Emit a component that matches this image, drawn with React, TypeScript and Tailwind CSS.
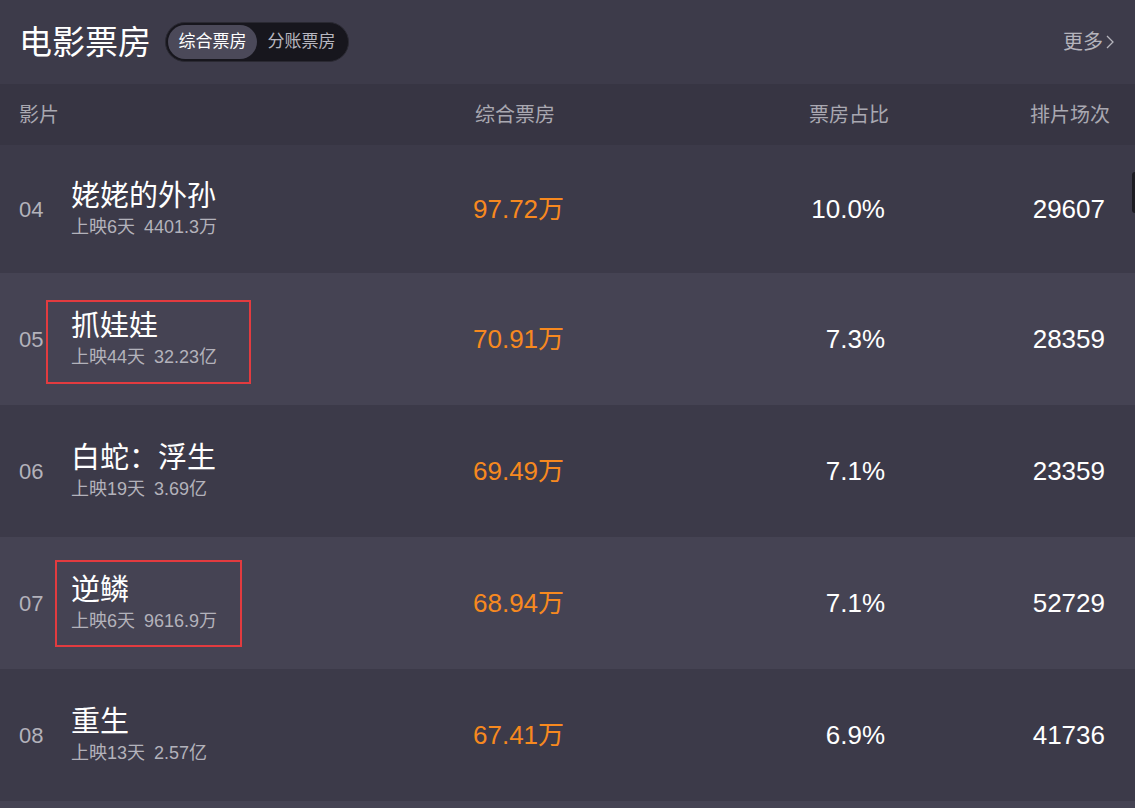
const films = [
  { no: '04', name: '姥姥的外孙', days: '上映6天', total: '4401.3万', box: '97.72万', rate: '10.0%', shows: '29607', light: false, mark: '' },
  { no: '05', name: '抓娃娃', days: '上映44天', total: '32.23亿', box: '70.91万', rate: '7.3%', shows: '28359', light: true, mark: 'a' },
  { no: '06', name: '白蛇：浮生', days: '上映19天', total: '3.69亿', box: '69.49万', rate: '7.1%', shows: '23359', light: false, mark: '' },
  { no: '07', name: '逆鳞', days: '上映6天', total: '9616.9万', box: '68.94万', rate: '7.1%', shows: '52729', light: true, mark: 'b' },
  { no: '08', name: '重生', days: '上映13天', total: '2.57亿', box: '67.41万', rate: '6.9%', shows: '41736', light: false, mark: '' },
];

const font = { fontFamily: '"Liberation Sans", "Noto Sans CJK SC", sans-serif' };

export default function App() {
  return (
    <div className="relative w-[1135px] h-[808px] overflow-hidden bg-[#454353]" style={font}>
      {/* top bar */}
      <div className="h-[84px] bg-[#3d3b4a] flex items-center pl-[19px] pr-[19px]">
        <h1 className="text-[33px] text-white leading-none">电影票房</h1>
        <div className="ml-[14px] h-[40px] w-[184px] rounded-full bg-[#17161d] border border-[#2a2932] flex items-center px-[2px]">
          <span className="h-[34px] w-[89px] rounded-full bg-[#4b4959] text-white text-[17px] flex items-center justify-center">综合票房</span>
          <span className="flex-1 text-center text-[17px] text-[#b7b6bf]">分账票房</span>
        </div>
        <div className="ml-auto flex items-center text-[20px] text-[#b5b4bc] mr-[1px]">
          <span>更多</span>
          <svg width="10" height="16" viewBox="0 0 10 16" className="ml-[2px]">
            <path d="M2 2 L8 8 L2 14" fill="none" stroke="#b5b4bc" strokeWidth="1.3" />
          </svg>
        </div>
      </div>

      {/* table header */}
      <div className="h-[61px] bg-[#373543] flex items-center pl-[19px] text-[20px] text-[#a9a8b1]">
        <span className="w-[456px]">影片</span>
        <span className="w-[200px]">综合票房</span>
        <span className="w-[214px] text-right">票房占比</span>
        <span className="w-[221px] text-right">排片场次</span>
      </div>

      {films.map((f, i) => (
        <div
          key={f.no}
          className={`relative flex items-center pl-[19px] ${i === 0 ? 'h-[128px]' : 'h-[132px]'} ${f.light ? 'bg-[#454353]' : 'bg-[#3c3a49]'}`}
        >
          <span className="w-[52px] text-[22px] text-[#b3b2bb]">{f.no}</span>
          <div className="w-[402px] flex flex-col">
            <span className="text-[29px] text-white leading-[34px]">{f.name}</span>
            <span className="text-[18px] text-[#b3b2bb] leading-[24px] mt-[2px]">
              {f.days}
              <span className="ml-[9px]">{f.total}</span>
            </span>
          </div>
          <span className="w-[200px] text-[26px] text-[#f7891f]">{f.box}</span>
          <span className="w-[212px] text-right text-[26px] text-white">{f.rate}</span>
          <span className="w-[220px] text-right text-[26px] text-white">{f.shows}</span>
          {f.mark === 'a' && (
            <div className="absolute left-[46px] top-[27px] w-[205px] h-[84px] border-2 border-[#e23b3f]" />
          )}
          {f.mark === 'b' && (
            <div className="absolute left-[55px] top-[23px] w-[187px] h-[87px] border-2 border-[#e23b3f]" />
          )}
        </div>
      ))}

      {/* scroll thumb */}
      <div className="absolute right-0 top-[172px] w-[3px] h-[41px] bg-[#1d1c23] rounded-l-sm" />
    </div>
  );
}
